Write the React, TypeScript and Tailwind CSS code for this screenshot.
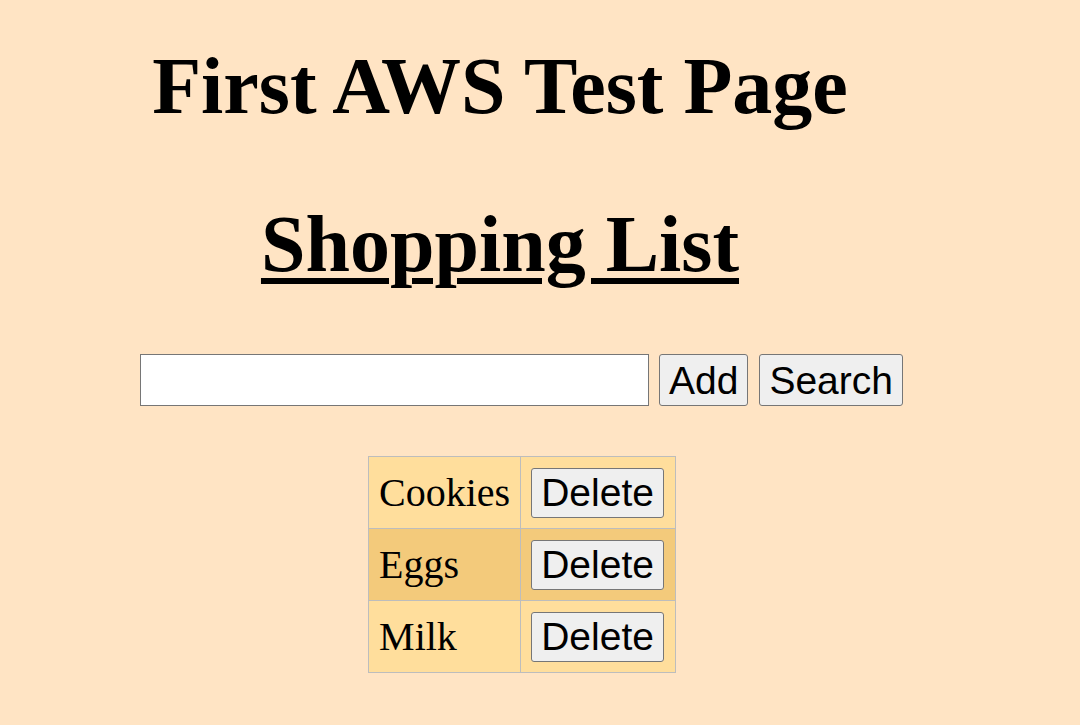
const items = ['Cookies', 'Eggs', 'Milk'];

export default function App() {
  return (
    <div className="min-h-[725px] w-full bg-[#ffe4c4] text-black">
      <div className="w-[1000px] pt-[40px] text-center font-['Liberation_Serif',serif]">
        <h1 className="text-[80px] font-bold leading-[1.15]">First AWS Test Page</h1>
        <h2 className="mt-[66px] text-[80px] font-bold leading-[1.15] underline decoration-[6px] underline-offset-[7px]">
          Shopping List
        </h2>
      </div>

      <div className="mt-[64px] flex w-[1043px] justify-center font-['Liberation_Sans',sans-serif] text-[39px]">
        <input
          type="text"
          className="h-[52px] w-[509px] border border-[#767676] bg-white px-1 outline-none"
        />
        <button className="ml-[10px] h-[52px] rounded-[3px] border border-[#767676] bg-[#efefef] px-[9px] leading-none">
          Add
        </button>
        <button className="ml-[11px] h-[52px] rounded-[3px] border border-[#767676] bg-[#efefef] px-[9px] leading-none">
          Search
        </button>
      </div>

      <div className="mt-[50px] flex w-[1044px] justify-center">
        <table className="border-collapse">
          <tbody>
            {items.map((item, i) => (
              <tr key={item} className={i === 1 ? 'bg-[#f3ca7b]' : 'bg-[#ffde9c]'}>
                <td className="h-[72px] border border-[#bdbdbd] pl-[10px] pr-[10px] font-['Liberation_Serif',serif] text-[40px]">
                  {item}
                </td>
                <td className="h-[72px] border border-[#bdbdbd] pl-[10px] pr-[11px]">
                  <button className="h-[50px] rounded-[3px] border border-[#767676] bg-[#efefef] px-[9px] font-['Liberation_Sans',sans-serif] text-[39px] leading-none">
                    Delete
                  </button>
                </td>
              </tr>
            ))}
          </tbody>
        </table>
      </div>
    </div>
  );
}
